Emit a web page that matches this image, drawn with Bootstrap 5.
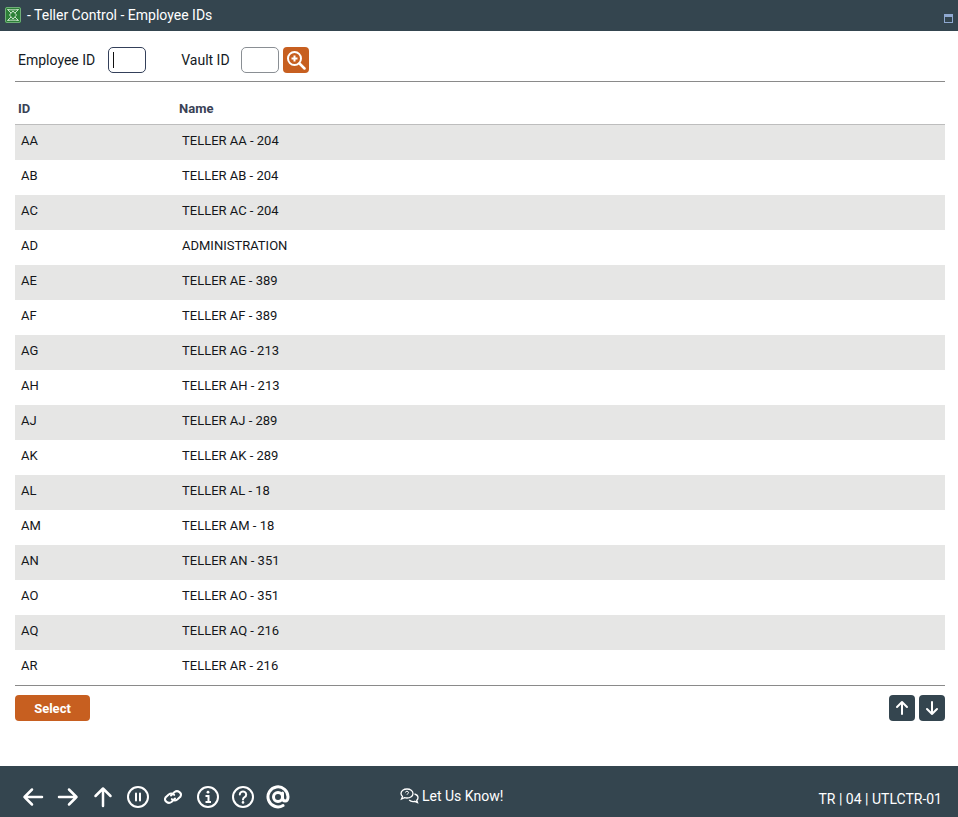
<!DOCTYPE html>
<html lang="en"><head><meta charset="utf-8"><title>Teller Control - Employee IDs</title>
<link href="https://cdn.jsdelivr.net/npm/bootstrap@5.3.0/dist/css/bootstrap.min.css" rel="stylesheet">
<style>
html,body{height:100%;overflow:hidden}
body{font-family:Roboto,"Liberation Sans",sans-serif;color:#212529;background:#fff}
.shell{height:817px}
.titlebar{height:31px;background:#34454f;color:#fff;font-size:14px;padding:0 5px}
.titlebar svg.logo{width:16px;height:16px;margin:-2px 6px 0 0;flex:none}
.titlebar .win{width:9px;height:9px;margin:5px 0 0 auto;flex:none;border:1px solid #8fa8d0;border-top-width:3px}
.workarea{padding:0 13px 0 15px}
.filterbar{height:51px;border-bottom:1px solid #8a8a8a;padding-left:3px;padding-top:16px;font-size:14px;color:#141a24;align-items:flex-start}
.filterbar label{line-height:26px}
.idbox{width:38px;height:26px;border:1px solid #8a8f94;border-radius:5px;background:#fff;padding:0;outline:0;display:block}
.idbox.active{border-color:#34405a;caret-color:transparent}
.caretwrap{position:relative;margin-left:13px;margin-right:35px}
.fakecaret{position:absolute;left:5px;top:5px;width:1px;height:16px;background:#111}
.vaultwrap{margin-left:11px;margin-right:4px}
.iconbtn{width:26px;height:26px;border:0;padding:0;border-radius:4px;display:flex;align-items:center;justify-content:center;color:#fff}
.iconbtn.orange{background:#c75f20}
.iconbtn.slate{background:#34454f}
.grid-table{font-size:13px;margin:0;table-layout:fixed;width:100%}
.grid-table th{height:42px;padding:0 0 0 3px;font-weight:700;color:#3a4256;vertical-align:middle;border-bottom:1px solid #bdbdbd}
.grid-table th span{position:relative;top:6px}
.grid-table td{height:35px;padding:0 0 0 6px;border:0;color:#14161a;vertical-align:middle;box-shadow:none;line-height:1}
.grid-table tbody tr:first-child td{height:36px}
.grid-table td span{position:relative;top:-2.5px}
.grid-table tbody tr:first-child td span{top:-1.5px}
.grid-table th:first-child,.grid-table td:first-child{width:161px}
.grid-table tbody tr:nth-child(odd) td{background:#e6e6e5}
.actionbar{border-top:1px solid #8a8a8a;padding-top:9px}
.selectbtn{width:75px;height:26px;background:#c75f20;color:#fff;border:0;border-radius:4px;font-size:13px;font-weight:700;padding:1px 0 0}
.appfoot{height:51px;background:#34454f;color:#fff;margin-top:auto;position:relative}
.navicons{padding:19px 0 0 21px}
.navicons svg{display:block;width:24px;height:24px;margin-right:11px;flex:none}
.feedback{position:absolute;left:400px;top:21px;font-size:14px;line-height:18px;gap:3px}
.screencode{position:absolute;right:16px;top:24px;font-size:14px;line-height:18px}
</style></head>
<body>
<div class="shell d-flex flex-column">
  <div class="titlebar d-flex align-items-center">
    <svg class="logo" viewBox="0 0 16 16"><rect width="16" height="16" rx="1.500" fill="#2d8038"/><rect x=".5" y=".5" width="15" height="15" rx="1.500" fill="none" stroke="#6fae78"/><g fill="none" stroke="#dcefde" stroke-width=".9"><path d="M2.500 2.500 6 6M13.500 2.500 10 6M2.500 13.500 6 10M13.500 13.500 10 10"/><path d="M8 4 4.500 8 8 12 11.500 8Z"/><path d="M2.500 2.500C6 3 10 3 13.500 2.500M2.500 13.500C6 13 10 13 13.500 13.500"/></g></svg>
    <span>- Teller Control - Employee IDs</span>
    <span class="win"></span>
  </div>
  <div class="workarea">
    <div class="filterbar d-flex">
      <label for="emp">Employee ID</label>
      <div class="caretwrap"><input id="emp" class="idbox active" type="text" aria-label="Employee ID"><span class="fakecaret"></span></div>
      <label for="vault">Vault ID</label>
      <div class="vaultwrap"><input id="vault" class="idbox" type="text"></div>
      <button class="iconbtn orange" type="button" aria-label="Search"><svg width="20" height="20" viewBox="0 0 20 20" fill="none" stroke="#fff" stroke-width="2"><circle cx="8.500" cy="8.500" r="6.500"/><path d="M13.500 13.500 18.500 18.500" stroke-linecap="round" stroke-width="2.500"/><path d="M8.500 5.500v6M5.500 8.500h6"/></svg></button>
    </div>
    <table class="table grid-table">
      <thead><tr><th><span>ID</span></th><th><span>Name</span></th></tr></thead>
      <tbody>
        <tr><td><span>AA</span></td><td><span>TELLER AA - 204</span></td></tr>
        <tr><td><span>AB</span></td><td><span>TELLER AB - 204</span></td></tr>
        <tr><td><span>AC</span></td><td><span>TELLER AC - 204</span></td></tr>
        <tr><td><span>AD</span></td><td><span>ADMINISTRATION</span></td></tr>
        <tr><td><span>AE</span></td><td><span>TELLER AE - 389</span></td></tr>
        <tr><td><span>AF</span></td><td><span>TELLER AF - 389</span></td></tr>
        <tr><td><span>AG</span></td><td><span>TELLER AG - 213</span></td></tr>
        <tr><td><span>AH</span></td><td><span>TELLER AH - 213</span></td></tr>
        <tr><td><span>AJ</span></td><td><span>TELLER AJ - 289</span></td></tr>
        <tr><td><span>AK</span></td><td><span>TELLER AK - 289</span></td></tr>
        <tr><td><span>AL</span></td><td><span>TELLER AL - 18</span></td></tr>
        <tr><td><span>AM</span></td><td><span>TELLER AM - 18</span></td></tr>
        <tr><td><span>AN</span></td><td><span>TELLER AN - 351</span></td></tr>
        <tr><td><span>AO</span></td><td><span>TELLER AO - 351</span></td></tr>
        <tr><td><span>AQ</span></td><td><span>TELLER AQ - 216</span></td></tr>
        <tr><td><span>AR</span></td><td><span>TELLER AR - 216</span></td></tr>
      </tbody>
    </table>
    <div class="actionbar d-flex justify-content-between">
      <button class="selectbtn" type="button">Select</button>
      <div class="d-flex gap-1">
        <button class="iconbtn slate" type="button" aria-label="Up"><svg width="16" height="16" viewBox="0 0 16 16" fill="none" stroke="#fff" stroke-width="2" stroke-linecap="round" stroke-linejoin="round"><path d="M8 14V2M3 7l5-5 5 5"/></svg></button>
        <button class="iconbtn slate" type="button" aria-label="Down"><svg width="16" height="16" viewBox="0 0 16 16" fill="none" stroke="#fff" stroke-width="2" stroke-linecap="round" stroke-linejoin="round"><path d="M8 2v12M3 9l5 5 5-5"/></svg></button>
      </div>
    </div>
  </div>
  <div class="appfoot">
    <div class="navicons d-flex">
      <svg viewBox="0 0 24 24" fill="none" stroke="#fff" stroke-width="2.500" stroke-linecap="round" stroke-linejoin="round"><path d="M21 12H3.500M11 4.500 3.500 12l7.500 7.500"/></svg>
      <svg viewBox="0 0 24 24" fill="none" stroke="#fff" stroke-width="2.500" stroke-linecap="round" stroke-linejoin="round"><path d="M3 12h17.500M13 4.500l7.500 7.500-7.500 7.500"/></svg>
      <svg viewBox="0 0 24 24" fill="none" stroke="#fff" stroke-width="2.500" stroke-linecap="round" stroke-linejoin="round"><path d="M12 21V3.500M4.500 11 12 3.500l7.500 7.500"/></svg>
      <svg viewBox="0 0 24 24" fill="none" stroke="#fff" stroke-width="2"><circle cx="12" cy="12" r="10"/><path d="M10 8.500v7M14 8.500v7" stroke-width="2" stroke-linecap="round"/></svg>
      <svg viewBox="0 0 24 24" fill="none" stroke="#fff" stroke-width="2" stroke-linecap="round"><path d="M10 10.500l3.500-3.500a4 3.600 0 0 1 6 4.500l-3.200 3a4 3.600 0 0 1-5.500-.4"/><path d="M14 13.500l-3.500 3.500a4 3.600 0 0 1-6-4.500l3.200-3a4 3.600 0 0 1 5.500.4"/></svg>
      <svg viewBox="0 0 24 24" fill="none" stroke="#fff" stroke-width="2"><circle cx="12" cy="12" r="10"/><path d="M9.500 11h3v6M9.500 17h5.500" stroke-width="2"/><circle cx="12" cy="7.200" r="1.400" fill="#fff" stroke="none"/></svg>
      <svg viewBox="0 0 24 24" fill="none" stroke="#fff" stroke-width="2"><circle cx="12" cy="12" r="10"/><path d="M8.800 9.500a3.200 3 0 1 1 4.800 2.600c-1 .6-1.600 1.100-1.600 2.400" stroke-linecap="round"/><circle cx="12" cy="17.400" r="1.300" fill="#fff" stroke="none"/></svg>
      <svg viewBox="0 0 24 24" fill="none" stroke="#fff" stroke-width="3" stroke-linecap="round"><path d="M17 20.500a10 10 0 1 1 5-8.500c0 2.500-1 4-2.800 4S16.500 14.500 16.500 12.500V8"/><circle cx="12" cy="12" r="4.500"/></svg>
    </div>
    <div class="feedback d-flex align-items-center">
      <svg width="19" height="16" viewBox="0 0 19 16" fill="none" stroke="#fff" stroke-width="1.300"><path d="M7 1C3.700 1 1 3 1 5.500c0 1.200.6 2.200 1.500 3L1.500 11l3-1.300c.8.200 1.600.3 2.500.3 3.300 0 6-2 6-4.500S10.300 1 7 1z"/><path d="M14.500 6c2 .5 3.500 2 3.500 3.700 0 1-.5 1.900-1.300 2.500l.8 2.300-2.800-1.200c-2 .5-4.200 0-5.500-1.300"/><path d="M5.500 4.500a1.500 1.300 0 1 1 2 1.300c-.4.200-.5.500-.5.900" stroke-width="1"/></svg>
      <span>Let Us Know!</span>
    </div>
    <div class="screencode">TR | 04 | UTLCTR-01</div>
  </div>
</div>
<script src="https://cdn.jsdelivr.net/npm/bootstrap@5.3.0/dist/js/bootstrap.bundle.min.js"></script>
</body></html>
